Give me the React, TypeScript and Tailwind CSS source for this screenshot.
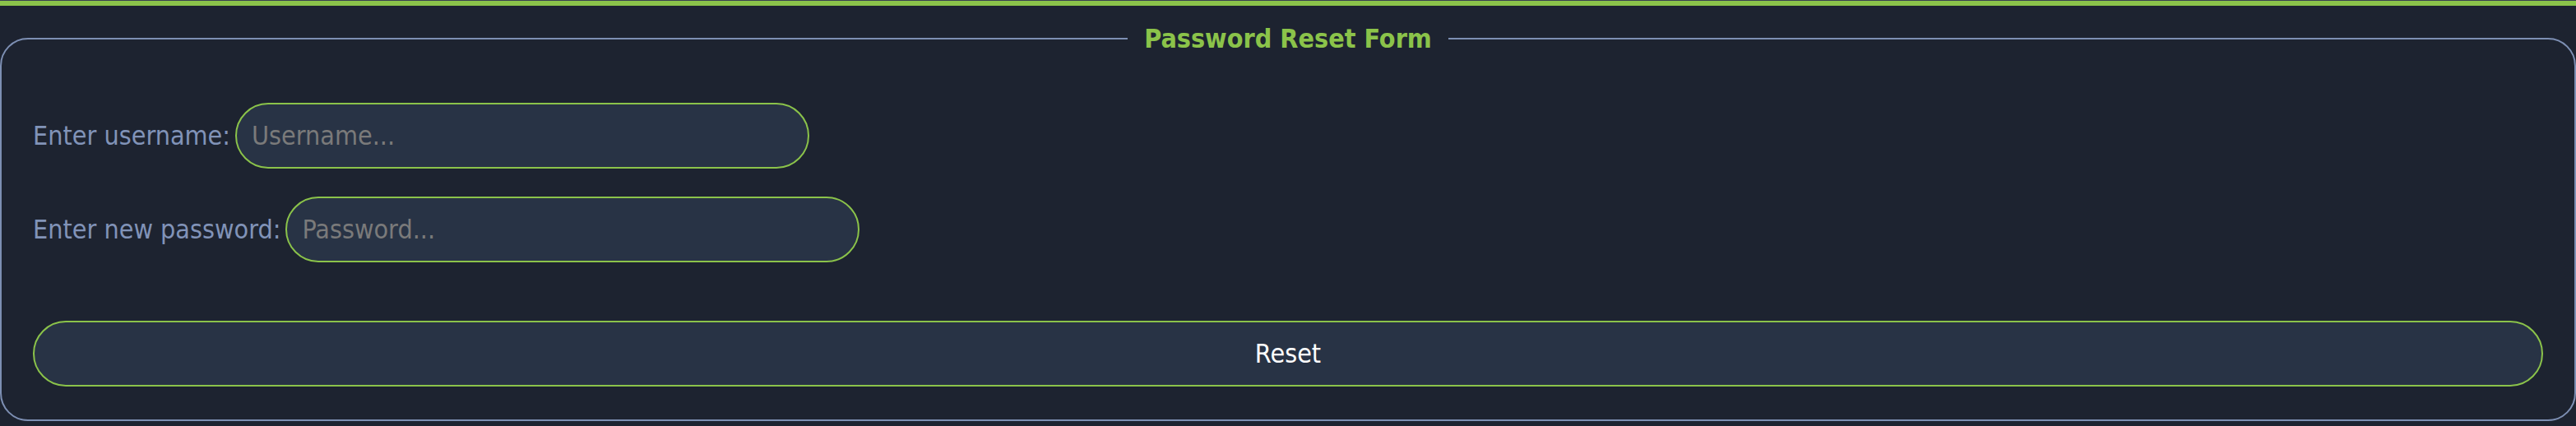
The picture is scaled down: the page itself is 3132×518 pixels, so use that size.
import React from 'react';

const fieldRows = [
  { id: 'username', label: 'Enter username:', placeholder: 'Username...', type: 'text' },
  { id: 'password', label: 'Enter new password:', placeholder: 'Password...', type: 'password' },
];

const App = () => {
  return (
    <div
      className="min-h-screen bg-[#1d2330]"
      style={{ fontFamily: '"DejaVu Sans Condensed", "DejaVu Sans", sans-serif' }}
    >
      <div className="h-[1px] bg-[#3b4150]" />
      <div className="h-[6px] bg-[#8bc34a]" />

      <form className="pt-[22px]" onSubmit={(e) => e.preventDefault()}>
        <fieldset className="rounded-[34px] border-2 border-[#7d8fb3] px-[38px] pb-[40px]">
          <legend className="mx-auto px-[20px] text-[32px] font-bold leading-[36px] text-[#8bc34a]">
            Password Reset Form
          </legend>

          <div className="mt-[60px] flex flex-col gap-[34px]">
            {fieldRows.map((row) => (
              <div key={row.id} className="flex items-center">
                <label htmlFor={row.id} className="mr-[6px] text-[32px] text-[#8193b8]">
                  {row.label}
                </label>
                <input
                  id={row.id}
                  type={row.type}
                  placeholder={row.placeholder}
                  className="h-[80px] w-[698px] rounded-full border-2 border-[#8bc34a] bg-[#283345] pl-[18px] text-[32px] text-white outline-none placeholder:text-[#7a7a7a]"
                />
              </div>
            ))}
          </div>

          <button
            type="submit"
            className="mt-[71px] h-[80px] w-full rounded-full border-2 border-[#8bc34a] bg-[#283345] text-[32px] text-white"
          >
            Reset
          </button>
        </fieldset>
      </form>
    </div>
  );
};

export default App;
